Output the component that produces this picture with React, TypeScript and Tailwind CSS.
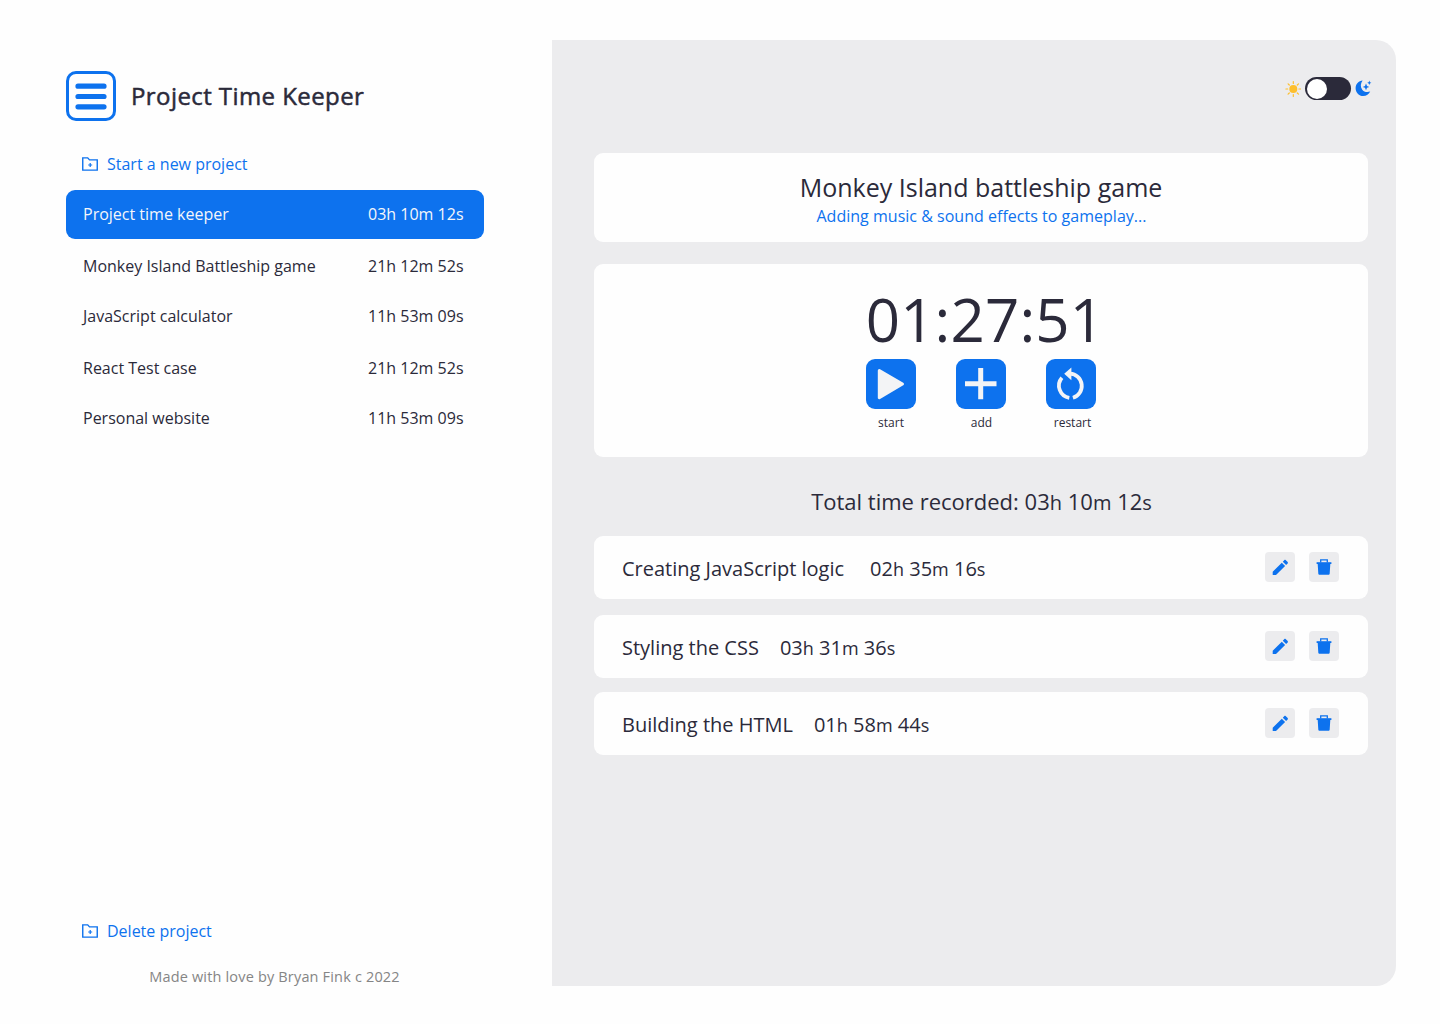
import React from "react";

type Project = { name: string; time: string; row: string };
type Task = { name: string; time: string[]; row: string; gap: string };

const projects: Project[] = [
  { name: "Project time keeper", time: "03h 10m 12s", row: "h-[49px] rounded-[9px] bg-[#0d72ee] pb-px text-[#f4f6fa]" },
  { name: "Monkey Island Battleship game", time: "21h 12m 52s", row: "mt-[2px] h-[50px]" },
  { name: "JavaScript calculator", time: "11h 53m 09s", row: "h-[50px]" },
  { name: "React Test case", time: "21h 12m 52s", row: "mt-[2px] h-[50px]" },
  { name: "Personal website", time: "11h 53m 09s", row: "h-[50px]" },
];

const tasks: Task[] = [
  { name: "Creating JavaScript logic", time: ["02", "35", "16"], row: "mt-[17px]", gap: "gap-[26px]" },
  { name: "Styling the CSS", time: ["03", "31", "36"], row: "mt-[16px]", gap: "gap-[21px]" },
  { name: "Building the HTML", time: ["01", "58", "44"], row: "mt-[14px]", gap: "gap-[21px]" },
];

function Logo() {
  return (
    <svg width="50" height="50" viewBox="0 0 50 50" fill="none" stroke="#0d72ee">
      <rect x="1.5" y="1.5" width="47" height="47" rx="8.5" strokeWidth="3" />
      <path d="M12 15.2H38M12 25.5H38M12 35.8H38" strokeWidth="5.2" strokeLinecap="round" />
    </svg>
  );
}

function FolderIcon() {
  return (
    <svg width="16" height="14" viewBox="0 0 16 14" fill="none" stroke="#0d72ee" strokeWidth="1.4">
      <path d="M0.75 13.1V0.9H5.7L7.5 2.9H15.25V13.1Z" />
      <path d="M8.2 6V10M6.2 8H10.2" strokeWidth="1.2" />
    </svg>
  );
}

function SunIcon() {
  return (
    <svg width="16" height="16" viewBox="0 0 16 16" fill="#fdbf2d" stroke="#fdbf2d">
      <circle cx="8.3" cy="8" r="4" stroke="none" />
      <path
        d="M8.3 0.6V2.4M8.3 13.6V15.4M0.9 8H2.7M13.9 8H15.7M3.1 2.8L4.3 4M12.3 12L13.5 13.2M3.1 13.2L4.3 12M12.3 4L13.5 2.8"
        strokeWidth="1.2"
        strokeLinecap="round"
      />
    </svg>
  );
}

function MoonIcon() {
  return (
    <svg width="17" height="17" viewBox="0 0 17 17" fill="#0d72ee">
      <path d="M7.6 .6C3.6 .9 .6 4.2 .6 8.3C.6 12.6 4 16.1 8.2 16.1C11.4 16.1 14 14.3 15.2 11.6C11.8 12.6 8.9 11.9 7.1 9.4C5.2 6.8 5.5 3.3 7.6 .6Z" />
      <path d="M11 3.6L12 6L14.3 6.9L12 7.8L11 10.2L10 7.8L7.7 6.9L10 6Z" />
      <path d="M14.3 .6L14.9 2.2L16.4 2.8L14.9 3.4L14.3 5L13.7 3.4L12.2 2.8L13.7 2.2Z" />
    </svg>
  );
}

function PlayIcon() {
  return (
    <svg width="50" height="50" viewBox="0 0 50 50">
      <path d="M13.3 11.5L36.5 25L13.3 38.7Z" fill="#f3f4f6" stroke="#f3f4f6" strokeWidth="3" strokeLinejoin="round" />
    </svg>
  );
}

function PlusIcon() {
  return (
    <svg width="50" height="50" viewBox="0 0 50 50">
      <path d="M24.7 9V40.3M9 24.8H40.5" stroke="#f3f4f6" strokeWidth="5" fill="none" />
    </svg>
  );
}

function RestartIcon() {
  return (
    <svg width="50" height="50" viewBox="0 0 50 50" fill="none" stroke="#f3f4f6" strokeWidth="3.8">
      <path d="M23.3 38.8A12.3 12.3 0 0 1 15.9 18.7" />
      <path d="M24 14.7A12.3 12.3 0 0 1 26.9 38.8" />
      <path d="M18.2 14.7L25.4 8.4V21.2Z" fill="#f3f4f6" stroke="none" />
    </svg>
  );
}

function PencilIcon() {
  return (
    <svg width="30" height="30" viewBox="0 0 30 30" fill="#0d72ee">
      <path d="M7.7 19.7V23H11L20.1 14L16.8 10.7ZM22.7 11.4C23 11 23 10.5 22.7 10.1L20.6 8.1C20.3 7.7 19.8 7.7 19.4 8.1L17.8 9.7L21.1 13Z" />
    </svg>
  );
}

function TrashIcon() {
  return (
    <svg width="30" height="30" viewBox="0 0 30 30" fill="#0d72ee">
      <path d="M8.7 12H21.3L20.7 21.4C20.7 22.3 20.1 22.8 19.3 22.8H10.7C9.9 22.8 9.3 22.3 9.3 21.4Z" />
      <path d="M7.6 10.2H22.4V12H7.6Z" />
      <path d="M11.7 10.5V7.9H18.3V10.5" fill="none" stroke="#0d72ee" strokeWidth="1.3" />
    </svg>
  );
}

function FolderLink({ label }: { label: string }) {
  return (
    <button className="flex h-6 items-center gap-[9px] pl-4 text-[16px] text-[#0d72ee]">
      <FolderIcon />
      <span>{label}</span>
    </button>
  );
}

function Duration({ parts, unit }: { parts: string[]; unit: string }) {
  const units = ["h", "m", "s"];
  return (
    <span>
      {parts.map((p, i) => (
        <React.Fragment key={units[i]}>
          {i > 0 && " "}
          {p}
          <span className={unit}>{units[i]}</span>
        </React.Fragment>
      ))}
    </span>
  );
}

function Control({ label, shift, children }: { label: string; shift?: string; children: React.ReactNode }) {
  return (
    <div className="flex w-[50px] flex-col items-center">
      <button className="size-[50px] rounded-[9px] bg-[#0d72ee]">{children}</button>
      <span className={`mt-[5px] text-[12px] leading-[18px] ${shift ?? ""}`}>{label}</span>
    </div>
  );
}

export default function App() {
  return (
    <div className="flex h-[1024px] w-[1440px] bg-[#fefefe] pt-10 pl-[66px] font-['Open_Sans',sans-serif] text-[#2b2a3a]">
      <aside className="flex h-[946px] w-[418px] flex-col pt-[31px]">
        <header className="flex h-[50px] items-center gap-[15px]">
          <Logo />
          <h1 className="text-[24px] tracking-[0.42px] [-webkit-text-stroke:0.5px_#2b2a3a]">Project Time Keeper</h1>
        </header>
        <nav className="mt-[31px]">
          <FolderLink label="Start a new project" />
          <ul className="mt-[14px]">
            {projects.map((p) => (
              <li key={p.name} className={`flex items-center justify-between pr-[20.5px] pl-[17px] text-[16px] ${p.row}`}>
                <span>{p.name}</span>
                <span>{p.time}</span>
              </li>
            ))}
          </ul>
        </nav>
        <div className="mt-auto">
          <FolderLink label="Delete project" />
          <p className="mt-[24px] mb-[-1px] pr-px text-center text-[14.5px] leading-5 tracking-[0.17px] text-[#858585]">Made with love by Bryan Fink c 2022</p>
        </div>
      </aside>

      <main className="ml-[68px] flex h-[946px] w-[844px] flex-col rounded-r-[20px] bg-[#ececee] pr-7 pl-[42px]">
        <div className="mt-[37px] mr-[-4px] flex h-[23px] items-center justify-end">
          <SunIcon />
          <div className="mr-1 ml-[4px] h-[23px] w-[46px] rounded-full bg-[#2b2a3a] p-[1.5px]">
            <div className="size-5 rounded-full bg-white" />
          </div>
          <MoonIcon />
        </div>

        <section className="mt-[53px] h-[89px] rounded-[9px] bg-[#fefefe] pt-[18px] text-center">
          <h2 className="text-[25px] leading-8">Monkey Island battleship game</h2>
          <p className="mt-px pl-px text-[16px] leading-6 tracking-[0.02px] text-[#0d72ee]">Adding music &amp; sound effects to gameplay...</p>
        </section>

        <section className="mt-[22px] h-[193px] rounded-[9px] bg-[#fefefe] pt-[19px]">
          <div className="pl-2 text-center text-[60px] leading-[72px] tracking-[0.15px]">01:27:51</div>
          <div className="mt-[4px] flex justify-center gap-10">
            <Control label="start"><PlayIcon /></Control>
            <Control label="add" shift="pl-px"><PlusIcon /></Control>
            <Control label="restart" shift="pl-[3px]"><RestartIcon /></Control>
          </div>
        </section>

        <h3 className="mt-[28px] pl-px text-center text-[22px] leading-8">
          Total time recorded: <Duration parts={["03", "10", "12"]} unit="text-[20px]" />
        </h3>

        <div>
          {tasks.map((t) => (
            <div key={t.name} className={`flex h-[63px] items-center justify-between rounded-[9px] bg-[#fefefe] pr-[29px] pl-7 ${t.row}`}>
              <div className={`flex pt-[2px] text-[20px] leading-8 ${t.gap}`}>
                <span>{t.name}</span>
                <Duration parts={t.time} unit="text-[18px]" />
              </div>
              <div className="flex gap-[14px] pb-px">
                <button className="size-[30px] rounded-[4px] bg-[#ececee]"><PencilIcon /></button>
                <button className="size-[30px] rounded-[4px] bg-[#ececee]"><TrashIcon /></button>
              </div>
            </div>
          ))}
        </div>
      </main>
    </div>
  );
}
